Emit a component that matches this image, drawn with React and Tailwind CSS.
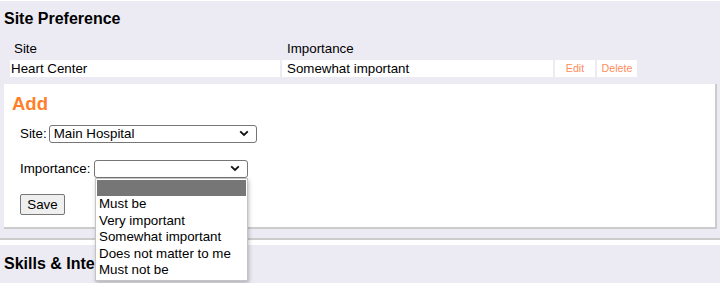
import React from "react";

const Chevron = () => (
  <svg width="10" height="7" viewBox="0 0 10 7" className="shrink-0">
    <path d="M1.2 1.3 L5 5 L8.8 1.3" fill="none" stroke="#111" strokeWidth="1.8" />
  </svg>
);

const FakeSelect = ({ value, className }) => (
  <div
    className={`flex items-center justify-between border border-[#767676] rounded-[3px] bg-white pl-[4px] pr-[7px] ${className}`}
  >
    <span className="leading-none">{value}</span>
    <Chevron />
  </div>
);

const options = ["Must be", "Very important", "Somewhat important", "Does not matter to me", "Must not be"];

export default function App() {
  return (
    <div className="relative w-[720px] h-[283px] overflow-hidden bg-[#ecebf4] border-t border-white font-['Liberation_Sans',Arial,sans-serif] text-[13.33px] text-black">
      {/* Site Preference */}
      <div className="pt-[9px]">
        <h2 className="pl-[4px] text-[16px] font-bold leading-[18px]">Site Preference</h2>

        <div className="mt-[12px] pl-[10px] flex flex-col gap-[2px]">
          <div className="flex gap-[2px] h-[17px] items-center">
            <div className="w-[270px] pl-[4px]">Site</div>
            <div className="w-[271px] pl-[5px]">Importance</div>
          </div>
          <div className="flex gap-[2px] h-[17px] mt-[1px]">
            <div className="w-[270px] bg-white pl-[1px] leading-[17px]">Heart Center</div>
            <div className="w-[271px] bg-white pl-[5px] leading-[17px]">Somewhat important</div>
            <div className="w-[40px] bg-white text-center text-[10.67px] leading-[17px] text-[#ff8c5c]">Edit</div>
            <div className="w-[40px] bg-white text-center text-[10.67px] leading-[17px] text-[#ff8c5c]">Delete</div>
          </div>
        </div>

        {/* Add panel */}
        <div className="ml-[4px] mt-[7px] w-[713px] h-[145px] bg-white border-r-2 border-b-2 border-[#cccccc] pl-[8px] pt-[9px]">
          <h3 className="text-[18.5px] font-bold leading-[22px] text-[#ff7f2a]">Add</h3>
          <div className="mt-[9px] pl-[8px] flex items-center gap-[2px]">
            <span>Site:</span>
            <FakeSelect value="Main Hospital" className="w-[208px] h-[18px]" />
          </div>
          <div className="mt-[15px] pl-[8px] flex items-center gap-[4px]">
            <span>Importance:</span>
            <FakeSelect value="" className="w-[154px] h-[18px]" />
          </div>
          <div className="mt-[15px] pl-[8px]">
            <button className="w-[45px] h-[21px] border border-[#767676] rounded-[2px] bg-[#efefef] leading-none">
              Save
            </button>
          </div>
        </div>

        <div className="mt-[9px] h-[2px] bg-[#cccccc]" />
        <div className="h-[5px] bg-white" />
        <h2 className="pl-[4px] pt-[10px] text-[16px] font-bold leading-[18px]">Skills &amp; Interests</h2>
      </div>

      {/* Open dropdown list */}
      <div className="absolute left-[95px] top-[177px] w-[153px] bg-white border border-[#c4c4c4] shadow-[1px_2px_4px_rgba(0,0,0,0.25)] pt-[1px] pb-[1px]">
        <div className="mx-[1px] h-[16px] bg-[#767676]" />
        {options.map((o) => (
          <div key={o} className="h-[16.5px] leading-[16.5px] pl-[3px] whitespace-nowrap">
            {o}
          </div>
        ))}
      </div>
    </div>
  );
}
